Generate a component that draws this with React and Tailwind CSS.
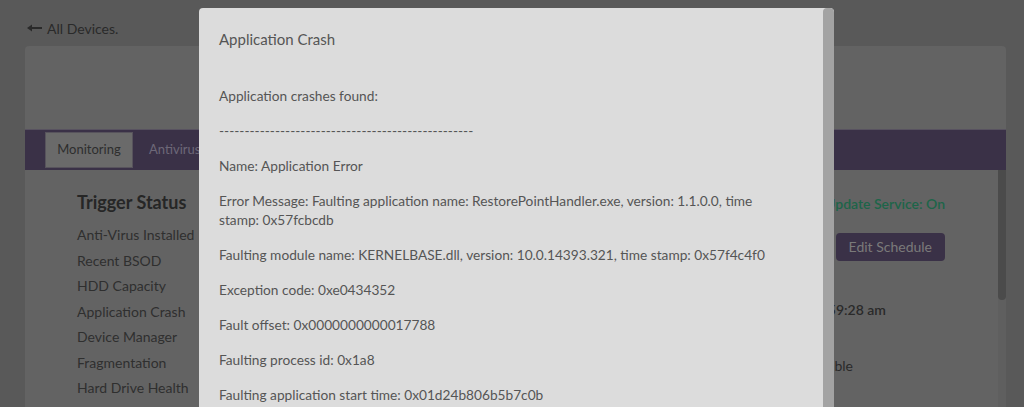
const TRIGGERS = [
  'Anti-Virus Installed',
  'Recent BSOD',
  'HDD Capacity',
  'Application Crash',
  'Device Manager',
  'Fragmentation',
  'Hard Drive Health',
];

const CRASH_LINES = [
  'Application crashes found:',
  '-'.repeat(50),
  'Name: Application Error',
  'Error Message: Faulting application name: RestorePointHandler.exe, version: 1.1.0.0, time stamp: 0x57fcbcdb',
  'Faulting module name: KERNELBASE.dll, version: 10.0.14393.321, time stamp: 0x57f4c4f0',
  'Exception code: 0xe0434352',
  'Fault offset: 0x0000000000017788',
  'Faulting process id: 0x1a8',
  'Faulting application start time: 0x01d24b806b5b7c0b',
];

function BackArrow() {
  return (
    <svg width="15" height="8" viewBox="0 0 15 8" className="text-[#2a2a2a]">
      <path d="M0 4 L5 0.5 L5 7.5 Z" fill="currentColor" />
      <rect x="4" y="3" width="11" height="2" fill="currentColor" />
    </svg>
  );
}

export default function App() {
  return (
    <div className="relative h-[407px] w-full overflow-hidden bg-[#595959] font-['Lato',sans-serif]">
      {/* page behind the overlay */}
      <div className="px-[25px] pr-[18px]">
        <div className="flex h-[46px] items-center gap-[5px] pl-[2px] pt-[10px] text-[14px] text-[#2a2a2a]">
          <BackArrow />
          <span>All Devices.</span>
        </div>

        <div className="overflow-hidden rounded-t-[4px] bg-[#636363]">
          <div className="h-[83px]" />
          <div className="flex h-[41px] items-stretch border-t border-[#585260] bg-[#3a3147] pl-[20px]">
            <div className="my-[2px] flex w-[88px] items-center justify-center border border-[#57535c] bg-[#6a6a6a] text-[13px] text-[#2e2e2e]">
              Monitoring
            </div>
            <div className="flex items-center px-[16px] text-[13px] text-[#6d6878]">Antivirus</div>
            <div className="flex items-center px-[16px] text-[13px] text-[#6d6878]">Patching</div>
          </div>

          <div className="flex h-[240px]">
            <div className="flex-1 pl-[52px] pt-[21px]">
              <h2 className="mb-[9px] text-[18px] font-bold leading-[22px] text-[#262626]">Trigger Status</h2>
              {TRIGGERS.map((t) => (
                <div key={t} className="text-[14px] leading-[25.5px] text-[#2f2f2f]">{t}</div>
              ))}
            </div>

            <div className="flex w-[300px] flex-col items-end whitespace-nowrap pr-[53px] pt-[24px] text-[14px]">
              <div className="font-semibold leading-[20px] text-[#1d6549]">Windows Update Service: On</div>
              <div className="mt-[19px] rounded-[4px] bg-[#3a3147] px-[13px] py-[5px] leading-[18px] text-[#7a7a7a]">Edit Schedule</div>
              <div className="mt-[39px] pr-[59px] font-semibold leading-[20px] text-[#2a2a2a]">Last Checked: 9:59:28 am</div>
              <div className="mt-[36px] pr-[92px] leading-[20px] text-[#2a2a2a]">Available</div>
            </div>

            <div className="w-[8px] bg-[#5f5f5f]">
              <div className="h-[130px] rounded-b-[4px] bg-[#4b4b4b]" />
            </div>
          </div>
        </div>
      </div>

      {/* modal */}
      <div className="absolute left-[199px] top-[8px] flex h-[420px] w-[635px] overflow-hidden rounded-t-[4px] bg-[#dcdcdc]">
        <div className="flex-1 px-[20px] pt-[21px] text-[#555555]">
          <div className="text-[15px] leading-[20px]">Application Crash</div>
          <div className="mt-[37px] text-[13.7px] leading-[19px]">
            {CRASH_LINES.map((l, i) => (
              <p key={i} className="mb-[16px] pr-[20px]">{l}</p>
            ))}
          </div>
        </div>
        <div className="w-[11px] rounded-t-[4px] bg-[#a3a3a3]" />
      </div>
    </div>
  );
}
